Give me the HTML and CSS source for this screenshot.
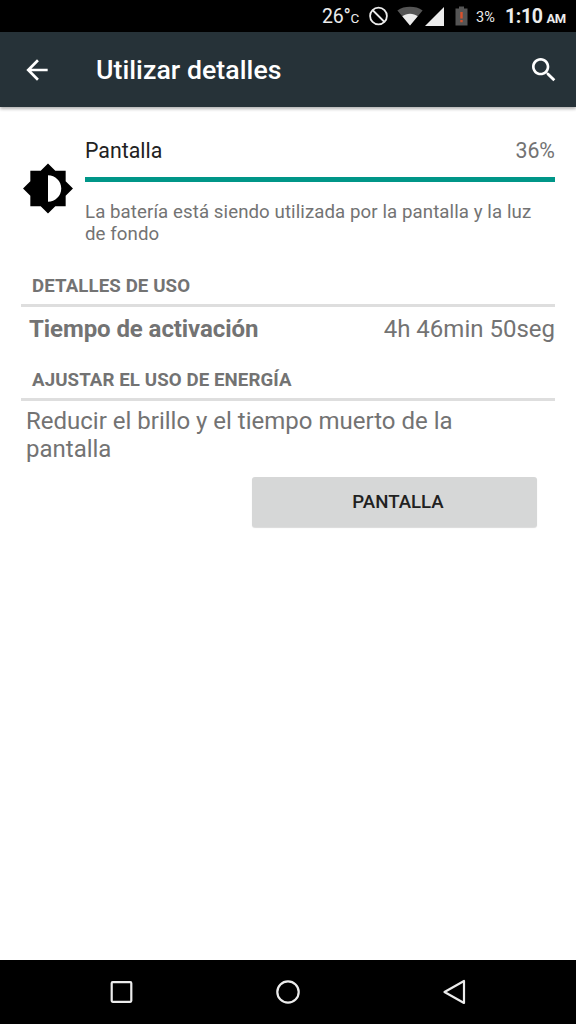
FILE: index.html
```
<!DOCTYPE html>
<html lang="es">
<head>
    <meta charset="UTF-8">
    <meta name="viewport" content="width=device-width, initial-scale=1.0">
    <title>Utilizar detalles</title>
    <link rel="stylesheet" href="styles.css">
</head>
<body>

    <!-- Status Bar -->
    <div class="status-bar">
        <span class="temperature">26°<small>C</small></span>
        <svg class="icon-blocked" width="20" height="20" viewBox="0 0 20 20">
            <circle cx="10.500" cy="10" r="8.400"/>
            <path d="M4.500 4l12 12"/>
        </svg>
        <svg class="icon-wifi" width="26" height="20" viewBox="0 0 26 20">
            <path class="dim" d="M13 19.500L.4 4.400C4 1.900 8.300.8 13 .8s9 1.100 12.600 3.600z"/>
            <path d="M13 19.500L5.300 10.200C7.500 8.600 10.100 7.700 13 7.700s5.500.9 7.700 2.500z"/>
        </svg>
        <svg class="icon-signal" width="20" height="19" viewBox="0 0 20 19">
            <path d="M0 19L19 0v19z"/>
        </svg>
        <svg class="icon-battery" width="13" height="20" viewBox="0 0 13 20">
            <path class="dim" d="M4 .5h5v2h3.500v17H.5v-17H4z"/>
            <path class="alert" d="M5.300 6h2.400v6.500H5.300zM5.300 14h2.400v2.300H5.300z"/>
        </svg>
        <span class="battery-level">3%</span>
        <span class="clock">1:10<small>AM</small></span>
    </div>

    <!-- App Bar -->
    <header class="app-bar">
        <svg class="back-btn" width="32" height="32" viewBox="0 0 24 24">
            <path d="M20 11H7.830l5.590-5.590L12 4l-8 8 8 8 1.410-1.410L7.830 13H20v-2z"/>
        </svg>
        <h1>Utilizar detalles</h1>
        <svg class="search-btn" width="32" height="32" viewBox="0 0 24 24">
            <path d="M15.500 14h-.79l-.28-.27C15.410 12.590 16 11.110 16 9.500 16 5.910 13.090 3 9.500 3S3 5.910 3 9.500 5.910 16 9.500 16c1.610 0 3.090-.59 4.230-1.570l.27.28v.79l5 4.990L20.490 19l-4.990-5zm-6 0C7.010 14 5 11.990 5 9.500S7.010 5 9.500 5 14 7.010 14 9.500 11.990 14 9.500 14z"/>
        </svg>
    </header>

    <main class="content">
        <!-- Usage Summary -->
        <section class="summary">
            <svg class="brightness-icon" width="54" height="53" viewBox="0 0 24 24">
                <path d="M20 15.310L23.310 12 20 8.690V4h-4.690L12 .69 8.690 4H4v4.690L.69 12 4 15.310V20h4.690L12 23.310 15.310 20H20v-4.690zM12 18V6c3.310 0 6 2.690 6 6s-2.690 6-6 6z"/>
            </svg>
            <div class="summary-body">
                <div class="summary-title">
                    <span class="name">Pantalla</span>
                    <span>36%</span>
                </div>
                <div class="progress"></div>
                <p class="description">La batería está siendo utilizada por la pantalla y la luz de fondo</p>
            </div>
        </section>

        <!-- Usage Details -->
        <h2>DETALLES DE USO</h2>
        <div class="detail-row">
            <span class="label">Tiempo de activación</span>
            <span>4h 46min 50seg</span>
        </div>

        <!-- Power Settings -->
        <h2>AJUSTAR EL USO DE ENERGÍA</h2>
        <p class="hint">Reducir el brillo y el tiempo muerto de la pantalla</p>
        <button class="action-btn" type="button">PANTALLA</button>
    </main>

    <!-- Navigation Bar -->
    <nav class="nav-bar">
        <svg width="32" height="32" viewBox="0 0 32 32"><rect x="5.700" y="6.200" width="19.600" height="19.600" rx="1"/></svg>
        <svg width="32" height="32" viewBox="0 0 32 32"><circle cx="16" cy="16" r="10.700"/></svg>
        <svg width="32" height="32" viewBox="0 0 32 32"><path d="M25 5v22L5.500 16z"/></svg>
    </nav>

</body>
</html>
```
FILE: styles.css
```
/* General Reset */
* {
    margin: 0;
    padding: 0;
    box-sizing: border-box;
}

body {
    display: flex;
    flex-direction: column;
    height: 100vh;
    background-color: #fff;
    color: #737373;
    font-family: Roboto, sans-serif;
    font-size: 24px;
    line-height: 28px;
    overflow: hidden;
}

svg {
    display: block;
    flex-shrink: 0;
}

/* Status Bar */
.status-bar {
    display: flex;
    align-items: center;
    height: 32px;
    padding-left: 322px;
    background-color: #000;
    color: #ececec;
    fill: #ececec;
    white-space: nowrap;
}

.status-bar span {
    padding-top: 3px;
}

.temperature {
    width: 46px;
    font-size: 19.5px;
    letter-spacing: -0.2px;
}

.temperature small {
    font-size: 13.5px;
}

.icon-blocked {
    fill: none;
    stroke: #ececec;
    stroke-width: 1.8;
}

.icon-wifi {
    margin-left: 9px;
}

.icon-signal {
    margin-left: 2px;
}

.icon-battery {
    margin-left: 10px;
}

.dim {
    fill: #555;
}

.alert {
    fill: #d9512c;
}

.battery-level {
    width: 29px;
    margin-left: 8px;
    font-size: 14.5px;
}

.clock {
    font-size: 19.5px;
    font-weight: 700;
    letter-spacing: -0.4px;
}

.clock small {
    margin-left: 4px;
    font-size: 13px;
}

/* App Bar */
.app-bar {
    display: flex;
    align-items: center;
    height: 75px;
    padding: 0 16px 0 21px;
    background-color: #263238;
    box-shadow: 0 2px 3px rgba(0, 0, 0, 0.3);
    color: #fff;
    fill: #fff;
}

.app-bar h1 {
    flex: 1;
    margin-left: 43px;
    font-size: 26.67px;
    font-weight: 500;
    letter-spacing: 0.05px;
}

/* Content */
.content {
    flex: 1;
    padding: 31px 21px 0;
}

/* Usage Summary */
.summary {
    display: flex;
    align-items: flex-start;
}

.brightness-icon {
    margin-top: 24px;
    fill: #000;
}

.summary-body {
    flex: 1;
    margin-left: 10px;
}

.summary-title {
    display: flex;
    justify-content: space-between;
    font-size: 21.33px;
    line-height: 25px;
}

.summary-title .name {
    color: #212121;
}

.progress {
    height: 5px;
    margin: 14px 0 19px;
    background-color: #009688;
}

.description {
    padding-right: 16px;
    font-size: 18.67px;
    line-height: 22px;
    letter-spacing: 0.08px;
}

/* Section Titles */
h2 {
    height: 32px;
    margin-top: 30px;
    padding-left: 11px;
    border-bottom: 3px solid #dedede;
    font-size: 18.67px;
    font-weight: 700;
    line-height: 22px;
    letter-spacing: 0.1px;
}

/* Detail Row */
.detail-row {
    display: flex;
    justify-content: space-between;
    margin-top: 8px;
    padding-left: 8px;
}

.detail-row .label {
    font-weight: 700;
    letter-spacing: -0.08px;
}

.detail-row + h2 {
    margin-top: 26px;
}

.hint {
    margin-top: 6px;
    padding: 0 48px 0 5px;
}

/* Action Button */
.action-btn {
    display: block;
    width: 285px;
    height: 50px;
    margin: 14px 18px 0 auto;
    padding-left: 7px;
    border: none;
    border-radius: 3px;
    background-color: #d6d7d7;
    box-shadow: 0 1px 1px rgba(0, 0, 0, 0.15);
    color: #212121;
    font-family: inherit;
    font-size: 18.67px;
    font-weight: 500;
}

/* Navigation Bar */
.nav-bar {
    display: flex;
    align-items: center;
    justify-content: center;
    gap: 134.500px;
    height: 64px;
    background-color: #000;
    fill: none;
    stroke: #ececec;
    stroke-width: 2.2;
    stroke-linejoin: round;
}
```
